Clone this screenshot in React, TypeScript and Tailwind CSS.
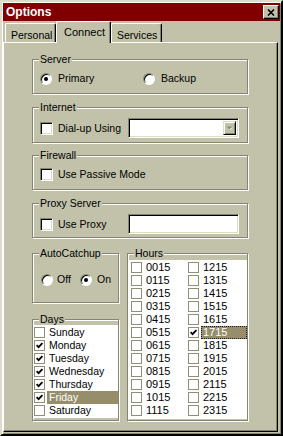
import React from 'react';

const days = [
  { name: 'Sunday', on: false },
  { name: 'Monday', on: true },
  { name: 'Tuesday', on: true },
  { name: 'Wednesday', on: true },
  { name: 'Thursday', on: true },
  { name: 'Friday', on: true, selected: true },
  { name: 'Saturday', on: false },
];

const hours = Array.from({ length: 24 }, (_, i) => `${String(i).padStart(2, '0')}15`);

const Tick = () => (
  <svg width="7" height="7" viewBox="0 0 7 7">
    <path d="M0.6 3.2 L2.6 5.2 L6.4 1" fill="none" stroke="#000" strokeWidth="1.8" />
  </svg>
);

// sunken 3d checkbox used in the group boxes
const Check3D = ({ checked }: { checked?: boolean }) => (
  <div className="w-[13px] h-[13px] shrink-0 bg-white border border-t-[#858570] border-l-[#858570] border-r-white border-b-white shadow-[inset_1px_1px_0_#000,inset_-1px_-1px_0_#dcdcc8] flex items-center justify-center">
    {checked && <Tick />}
  </div>
);

const Radio = ({ checked }: { checked?: boolean }) => (
  <div className="w-[12px] h-[12px] shrink-0 rounded-full bg-white border border-t-[#858570] border-l-[#858570] border-r-white border-b-white shadow-[inset_1px_1px_0_#000] flex items-center justify-center">
    {checked && <div className="w-[4px] h-[4px] rounded-full bg-black" />}
  </div>
);

// flat checkbox used inside the list boxes
const ListCheck = ({ checked }: { checked?: boolean }) => (
  <div className="w-[11px] h-[11px] shrink-0 bg-white border border-[#8f8f78] flex items-center justify-center">
    {checked && <Tick />}
  </div>
);

const Group = ({ title, className, children }: { title: string; className: string; children?: React.ReactNode }) => (
  <div className={`border border-[#858570] shadow-[inset_1px_1px_0_#fff,1px_1px_0_#fff] ${className}`}>
    <div className="-mt-[7px] ml-[6px] w-fit bg-[#c2c2aa] px-[1px] leading-[13px]">{title}</div>
    {children}
  </div>
);

const Field = ({ combo }: { combo?: boolean }) => (
  <div className="w-[111px] h-[20px] bg-white border border-t-[#858570] border-l-[#858570] border-r-white border-b-white shadow-[inset_1px_1px_0_#000,inset_-1px_-1px_0_#dcdcc8] flex justify-end p-[2px]">
    {combo && (
      <div className="w-[13px] h-full bg-[#c2c2aa] border border-t-[#dcdcc8] border-l-[#dcdcc8] border-r-black border-b-black shadow-[inset_1px_1px_0_#fff,inset_-1px_-1px_0_#858570] flex items-center justify-center">
        <svg width="7" height="5" viewBox="0 0 7 5">
          <path d="M1 1 L6 1 L3.5 3.5 Z" fill="#fff" transform="translate(0.6 0.6)" />
          <path d="M0.5 0.5 L6.5 0.5 L3.5 3.5 Z" fill="#8c8c76" />
        </svg>
      </div>
    )}
  </div>
);

const Tab = ({ label, active }: { label: string; active?: boolean }) =>
  active ? (
    <div className="relative z-10 -mb-px h-[22px] w-[55px] bg-[#c2c2aa] border-t border-l border-t-white border-l-white border-r border-r-black rounded-tl-[2px] rounded-tr-[2px] shadow-[inset_-1px_0_0_#858570] pt-[4px] pl-[7px] leading-[13px] text-[11px]">
      {label}
    </div>
  ) : (
    <div className="h-[19px] w-[51px] bg-[#c2c2aa] border-t border-l border-t-white border-l-white border-r border-r-black rounded-tl-[2px] rounded-tr-[2px] shadow-[inset_-1px_0_0_#858570] pt-[5px] pl-[5px] leading-[13px] whitespace-nowrap">
      {label}
    </div>
  );

const HourItem = ({ h }: { h: string }) => {
  const on = h === '1715';
  return (
    <div className="h-[13px] flex items-center">
      <div className="ml-[3px]">
        <ListCheck checked={on} />
      </div>
      <div
        className={`ml-[2px] flex-1 h-[13px] leading-[11px] text-[11px] ${
          on ? 'bg-[#968e6a] text-white border border-dotted border-[#1c1c30] pl-[1px]' : 'pl-[2px] pt-[1px]'
        }`}
      >
        {h}
      </div>
    </div>
  );
};

export default function App() {
  return (
    <div className="w-[283px] h-[436px] bg-[#c2c2aa] border-2 border-t-[#dcdcc8] border-l-[#dcdcc8] border-r-black border-b-black shadow-[inset_1px_1px_0_#fff,inset_-1px_-1px_0_#858570] p-px flex flex-col text-[10.5px] text-black font-['Liberation_Sans',Arial,sans-serif]">
      {/* Title bar */}
      <div className="h-[18px] shrink-0 bg-[#800000] flex items-center justify-between pl-[3px] pr-[1px]">
        <span className="text-white font-bold text-[12px] leading-[16px]">Options</span>
        <div className="w-[16px] h-[14px] bg-[#c2c2aa] border border-t-[#fff] border-l-[#fff] border-r-black border-b-black shadow-[inset_-1px_-1px_0_#858570] flex items-center justify-center">
          <svg width="8" height="7" viewBox="0 0 8 7">
            <path d="M1 0.5 L7 6.5 M7 0.5 L1 6.5" stroke="#000" strokeWidth="1.6" />
          </svg>
        </div>
      </div>

      {/* Tabs */}
      <div className="mt-[1px] h-[20px] shrink-0 flex items-end pl-[2px]">
        <Tab label="Personal" />
        <Tab label="Connect" active />
        <Tab label="Services" />
      </div>

      {/* Tab page */}
      <div className="flex-1 mr-[2px] mb-[1px] border-t border-l border-t-white border-l-white border-r border-b border-r-black border-b-black shadow-[inset_-1px_-1px_0_#858570] pl-[28px] pt-[16px]">
        <Group title="Server" className="w-[216px] h-[35px]">
          <div className="mt-[6px] h-[13px] flex items-center pl-[7px]">
            <div className="w-[103px] flex items-center gap-[6px]">
              <Radio checked />
              <span className="leading-[13px]">Primary</span>
            </div>
            <div className="flex items-center gap-[6px]">
              <Radio />
              <span className="leading-[13px]">Backup</span>
            </div>
          </div>
        </Group>

        <Group title="Internet" className="mt-[13px] w-[216px] h-[36px]">
          <div className="mt-[4px] h-[20px] flex items-center">
            <div className="w-[95px] flex items-center gap-[5px] pl-[7px]">
              <Check3D />
              <span className="leading-[13px] whitespace-nowrap">Dial-up Using</span>
            </div>
            <Field combo />
          </div>
        </Group>

        <Group title="Firewall" className="mt-[12px] w-[216px] h-[35px]">
          <div className="mt-[6px] h-[13px] flex items-center gap-[5px] pl-[7px]">
            <Check3D />
            <span className="leading-[13px]">Use Passive Mode</span>
          </div>
        </Group>

        <Group title="Proxy Server" className="mt-[13px] w-[216px] h-[35px]">
          <div className="mt-[4px] h-[20px] flex items-center">
            <div className="w-[95px] flex items-center gap-[5px] pl-[7px]">
              <Check3D />
              <span className="leading-[13px]">Use Proxy</span>
            </div>
            <Field />
          </div>
        </Group>

        <div className="mt-[15px] flex gap-[8px]">
          <div className="w-[87px] flex flex-col">
            <Group title="AutoCatchup" className="h-[50px]">
              <div className="mt-[13px] h-[13px] flex items-center pl-[8px]">
                <div className="w-[39px] flex items-center gap-[4px]">
                  <Radio />
                  <span className="leading-[13px]">Off</span>
                </div>
                <div className="flex items-center gap-[5px]">
                  <Radio checked />
                  <span className="leading-[13px]">On</span>
                </div>
              </div>
            </Group>

            <Group title="Days" className="mt-[16px] h-[102px]">
              <div className="-mt-[1px] bg-white pt-[1px] pb-[1px]">
                {days.map((d) => (
                  <div key={d.name} className="h-[13px] flex items-center">
                    <div className="ml-[1px]">
                      <ListCheck checked={d.on} />
                    </div>
                    <div
                      className={`ml-[2px] flex-1 h-[13px] pl-[2px] pt-[1px] leading-[11px] ${
                        d.selected ? 'bg-[#968e6a] text-white' : ''
                      }`}
                    >
                      {d.name}
                    </div>
                  </div>
                ))}
              </div>
            </Group>
          </div>

          <Group title="Hours" className="w-[121px] h-[168px]">
            <div className="bg-white pt-[1px] pb-[2px] flex">
              <div className="w-[57px]">
                {hours.slice(0, 12).map((h) => (
                  <HourItem key={h} h={h} />
                ))}
              </div>
              <div className="flex-1">
                {hours.slice(12).map((h) => (
                  <HourItem key={h} h={h} />
                ))}
              </div>
            </div>
          </Group>
        </div>
      </div>
    </div>
  );
}
